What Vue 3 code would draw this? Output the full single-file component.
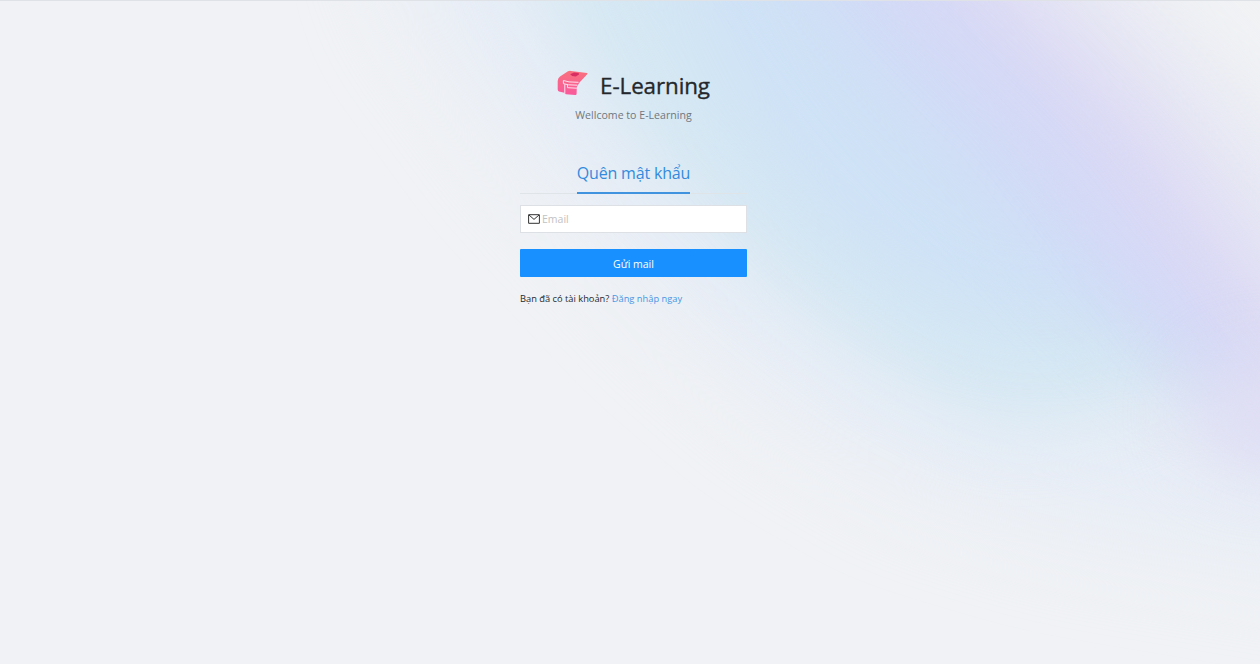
<script setup>
import { ref } from 'vue'

const email = ref('')
</script>

<template>
  <main class="page">
    <svg class="aurora" viewBox="0 0 1260 664" preserveAspectRatio="none" aria-hidden="true">
      <defs>
        <filter id="soft" filterUnits="userSpaceOnUse" x="-100" y="-300" width="1700" height="1300" color-interpolation-filters="sRGB">
          <feGaussianBlur stdDeviation="36" />
        </filter>
        <filter id="wide" filterUnits="userSpaceOnUse" x="-100" y="-300" width="1700" height="1300" color-interpolation-filters="sRGB">
          <feGaussianBlur stdDeviation="46" />
        </filter>
      </defs>
      <path filter="url(#wide)" fill="#e7edf6" d="M360-200L410 0L520 150L670 310L780 405L910 480L1060 525L1450 590V-200Z" />
      <path filter="url(#soft)" fill="#d5e8f3" d="M480-200L545 0L640 150L770 280L890 370L1000 425L1100 410L1180 370L1450 400V-200Z" />
      <path filter="url(#soft)" fill="#cfe2f6" d="M600-200L680 0L755 150L840 250L950 315L1050 330L1160 310L1450 380V-200Z" />
      <path filter="url(#soft)" fill="#d2daf6" d="M680-200L820-10L910 100L1000 195L1070 270L1150 350L1240 420L1450 480V-200Z" />
      <path filter="url(#soft)" fill="#dbd9f5" d="M780-200L930-10L1030 90L1110 200L1190 310L1250 380L1450 480V-200Z" />
      <path filter="url(#soft)" fill="#e7e8f4" d="M880-200L1025-10L1145 110L1235 230L1310 340L1450 450V-200Z" />
      <path filter="url(#soft)" fill="#f0f2f4" d="M980-200L1130-20L1220 75L1320 190L1450 330V-200Z" />
      <ellipse filter="url(#soft)" cx="1270" cy="415" rx="75" ry="55" fill="#e1dff4" />
    </svg>

    <section class="content">
      <header class="brand">
        <svg class="logo" viewBox="0 0 32 28" aria-hidden="true">
          <defs>
            <linearGradient id="pink" x1="0" y1="0" x2="0" y2="1">
              <stop offset="0" stop-color="#f8717c" />
              <stop offset="1" stop-color="#f9599d" />
            </linearGradient>
          </defs>
          <path fill="url(#pink)" d="M11 1.2Q12.5.6 14 .9L30 3.1Q31 3.4 30.2 4.3L22.5 12.5L19.8 17L19.6 24Q19.4 25 18.3 24.9L9 24.2Q7.3 24 7.3 22.8L2 21.6Q.7 21.1.7 19.6V11Q.8 8.2 3 6.6Z" />
          <path fill="#d92e63" d="M13.2 4.3L17 2.5L21.7 3L22 4.5L18.8 6.5L15.2 6Z" />
          <path fill="none" stroke="#ffe0ef" stroke-width="1" d="M6.4 10.5L12 11.9L21.5 12.3M6.2 13.6L11.5 14.8L20.5 15.2M6.4 10.5V13.6M7.8 14.2V24M10.5 14.8V17.7L19.8 18.2" />
        </svg>
        <h1>E-Learning</h1>
      </header>
      <p class="subtitle">Wellcome to E-Learning</p>

      <div class="tabs"><div class="tab">Quên mật khẩu</div></div>

      <form @submit.prevent>
        <label class="field">
          <svg class="mail" viewBox="0 0 12 10" aria-hidden="true">
            <path fill="none" stroke="#333" stroke-width="1" d="M.6.7H11.4V9.3H.6ZM1 1L6 5.4L11 1" />
          </svg>
          <input v-model="email" type="text" placeholder="Email" />
        </label>
        <button type="submit">Gửi mail</button>
      </form>
      <p class="signin">Bạn đã có tài khoản? <a href="#">Đăng nhập ngay</a></p>
    </section>
  </main>
</template>

<style>
body {
  background: #f0f2f5;
}
</style>

<style scoped>
.page {
  position: relative;
  box-sizing: border-box;
  height: 664px;
  overflow: hidden;
  border-top: 1px solid #dfe2e6;
  background: #f0f2f5;
  font-family: "Open Sans", "Noto Sans", sans-serif;
  color: #24282c;
}
.aurora {
  position: absolute;
  inset: 0;
  width: 100%;
  height: 100%;
}
.content {
  position: relative;
  width: 227px;
  margin-left: 520px;
  padding-top: 69px;
}
.brand {
  display: flex;
  justify-content: center;
  align-items: center;
  height: 32px;
}
.logo {
  width: 32px;
  height: 28px;
  margin: -4px 11px 0 0;
}
h1 {
  margin: 0;
  font-size: 22.4px;
  font-weight: 500;
  line-height: 32px;
  letter-spacing: -0.1px;
  -webkit-text-stroke: 0.35px currentColor;
  white-space: nowrap;
}
.subtitle {
  margin: 5px 0 0;
  font-size: 10.6px;
  line-height: 16px;
  text-align: center;
  color: #70777d;
}
.tabs {
  display: flex;
  justify-content: center;
  height: 71px;
  box-sizing: border-box;
  border-bottom: 1px solid #dfe4e8;
}
.tab {
  box-sizing: border-box;
  height: 71px;
  padding-top: 38px;
  border-bottom: 2px solid #3f93df;
  font-size: 16px;
  line-height: 24px;
  letter-spacing: -0.18px;
  color: #328bdd;
  white-space: nowrap;
}
.field {
  display: flex;
  align-items: center;
  box-sizing: border-box;
  height: 28px;
  margin-top: 11px;
  padding: 0 8px 0 7px;
  border: 1px solid #dde1e5;
  background: #fff;
}
.mail {
  flex: none;
  width: 12px;
  height: 10px;
  margin-right: 2px;
}
input {
  flex: 1;
  min-width: 0;
  padding: 0;
  border: 0;
  outline: 0;
  background: none;
  font: 10.5px/16px "Open Sans", "Noto Sans", sans-serif;
}
input::placeholder {
  color: #c2c2c2;
}
button {
  display: block;
  width: 100%;
  height: 28px;
  margin-top: 16px;
  padding: 2px 0 0;
  border: 0;
  border-radius: 1px;
  background: #1890ff;
  color: #fff;
  font: 10.5px/26px "Open Sans", "Noto Sans", sans-serif;
}
.signin {
  margin: 14px 0 0;
  font-size: 9.3px;
  line-height: 16px;
  white-space: nowrap;
}
a {
  color: #4596e4;
  text-decoration: none;
}
</style>
